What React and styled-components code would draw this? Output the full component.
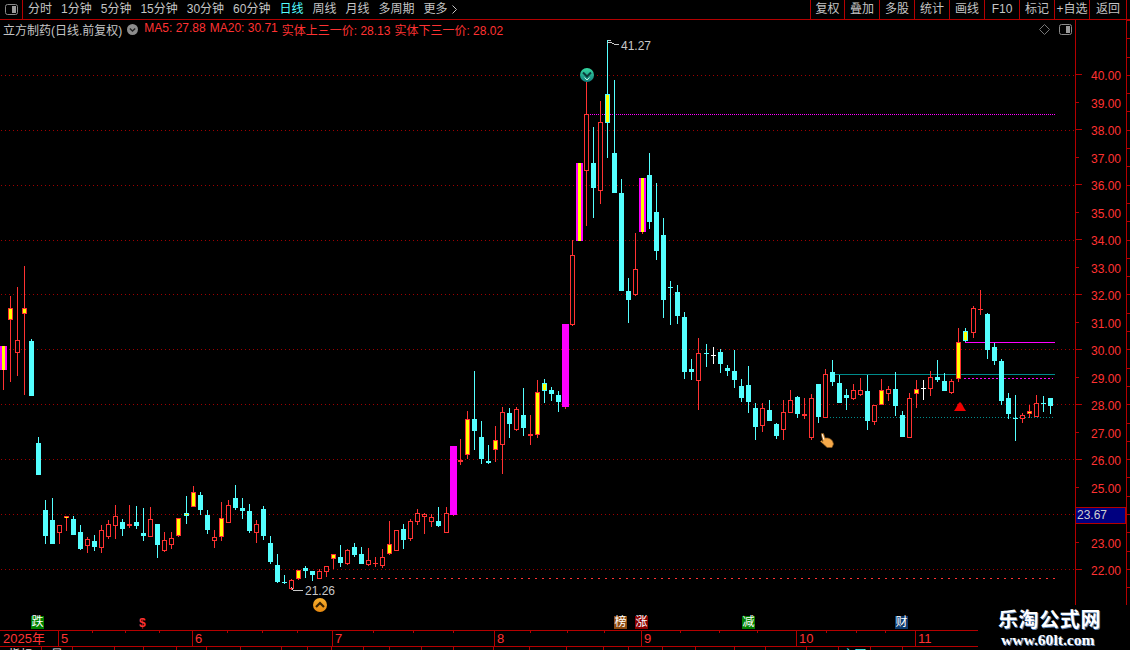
import React from "react";
import styled, { createGlobalStyle } from "styled-components";

const RED = "#ff3232";
const FRAME = "#b40000";
const CYAN = "#54ffff";
const YELLOW = "#ffff00";
const MAGENTA = "#ff00ff";
const CJK = `"Liberation Sans", "Noto Sans CJK SC", sans-serif`;

const GlobalStyle = createGlobalStyle`
  html, body {
    margin: 0;
    background: #000;
    overflow: hidden;
  }
`;

const Page = styled.div`
  position: relative;
  width: 1130px;
  height: 650px;
  overflow: hidden;
  background: #000;
  font-family: ${CJK};
  font-size: 12px;
  display: flex;
  flex-direction: column;
`;

const Toolbar = styled.div`
  height: 20px;
  box-sizing: border-box;
  border-bottom: 1px solid ${FRAME};
  display: flex;
  align-items: stretch;
  color: #c4c4c4;
  line-height: 19px;
`;

const ToggleCell = styled.div`
  width: 23px;
  box-sizing: border-box;
  border-right: 1px solid ${FRAME};
  display: flex;
  align-items: center;
  justify-content: center;
`;

const Periods = styled.div`
  flex: 1;
  display: flex;
  gap: 9px;
  padding-left: 5px;
`;

const Period = styled.span`
  display: flex;
  align-items: center;
  gap: 4px;
  color: ${(props) => (props.$active ? CYAN : "#c4c4c4")};
  white-space: nowrap;
`;

const Tools = styled.div`
  display: flex;
  margin-right: 3px;
  border-right: 1px solid ${FRAME};
`;

const ToolButton = styled.div`
  width: ${(props) => props.$width || 35}px;
  box-sizing: border-box;
  border-left: 1px solid ${FRAME};
  text-align: center;
  white-space: nowrap;
`;

const Main = styled.div`
  display: flex;
  height: 610px;
`;

const ChartPane = styled.div`
  width: 1075px;
  display: flex;
  flex-direction: column;
`;

const InfoRow = styled.div`
  height: 19px;
  display: flex;
  align-items: center;
  padding: 0 3px;
  gap: 5px;
  white-space: nowrap;
`;

const StockName = styled.span`
  color: #c4c4c4;
`;

const MaGroup = styled.div`
  display: flex;
  gap: 4px;
  margin-left: 1px;
`;

const MaValue = styled.span`
  color: ${RED};
`;

const InfoIcons = styled.div`
  margin-left: auto;
  display: flex;
  align-items: center;
  gap: 9px;
`;

const ChartSvg = styled.svg`
  display: block;
  width: 1075px;
  height: 573px;
`;

const EventRow = styled.div`
  position: relative;
  height: 18px;
`;

const EventBadge = styled.span`
  position: absolute;
  top: 4px;
  left: ${(props) => props.$left}px;
  width: 13px;
  height: 13px;
  line-height: 13px;
  text-align: center;
  font-size: 12px;
  color: #fff;
  background: ${(props) => props.$bg};
`;

const MoneyMark = styled.span`
  position: absolute;
  top: 5px;
  left: ${(props) => props.$left}px;
  color: ${RED};
  font-size: 12px;
  font-weight: bold;
  line-height: 13px;
`;

const PriceAxis = styled.div`
  position: relative;
  width: 51px;
  box-sizing: border-box;
  border-left: 1px solid ${FRAME};
  padding-top: 43px;
`;

const PriceLabel = styled.div`
  position: relative;
  height: 27.5px;
  line-height: 27.5px;
  padding-left: 15px;
  color: ${RED};

  &::before {
    content: "";
    position: absolute;
    left: 0;
    top: 11px;
    height: 1px;
    width: ${(props) => (props.$major ? 6 : 3)}px;
    background: ${FRAME};
  }
`;

const CurrentPrice = styled.div`
  position: absolute;
  left: -1px;
  top: 487px;
  width: 51px;
  height: 17px;
  box-sizing: border-box;
  border: 1px solid ${FRAME};
  background: #000080;
  color: #d0d0d0;
  line-height: 15px;
  padding-left: 1px;
`;

const TickStrip = styled.div`
  width: 4px;
  box-sizing: border-box;
  border-left: 1px solid ${FRAME};
  background: repeating-linear-gradient(
    to bottom,
    ${FRAME} 0,
    ${FRAME} 1px,
    transparent 1px,
    transparent 18.3px
  ) 0 0 / 3px 100% no-repeat;
`;

const DateAxis = styled.div`
  position: relative;
  height: 17px;
  box-sizing: border-box;
  border-top: 1px solid ${FRAME};
  border-bottom: 1px solid ${FRAME};
  color: ${RED};
  font-size: 13px;
  line-height: 16px;
`;

const YearLabel = styled.span`
  position: absolute;
  left: 3px;
  top: 0;
`;

const MonthMark = styled.span`
  position: absolute;
  left: ${(props) => props.$left}px;
  top: 0;
  height: 15px;
  padding-left: 2px;
  border-left: 1px solid ${FRAME};
`;

const DateTick = styled.i`
  position: absolute;
  left: ${(props) => props.$left}px;
  top: 0;
  width: 1px;
  height: 2px;
  background: ${FRAME};
`;

const TabRow = styled.div`
  display: flex;
  height: 3px;
  overflow: hidden;
`;

const Tab = styled.div`
  width: ${(props) => props.$width}px;
  box-sizing: border-box;
  border-right: 1px solid ${FRAME};
  text-align: center;
  line-height: 16px;
  white-space: nowrap;
  color: ${(props) => (props.$active ? CYAN : "#e0e0e0")};
`;

const Watermark = styled.div`
  position: absolute;
  left: 978px;
  top: 605px;
  width: 152px;
  height: 45px;
  background: #000;
  display: flex;
  flex-direction: column;
  align-items: flex-start;
  padding-left: 20px;
  box-sizing: border-box;
`;

const WatermarkTitle = styled.div`
  font-family: "Noto Sans CJK SC", sans-serif;
  font-weight: bold;
  font-size: 20px;
  letter-spacing: 0.6px;
  line-height: 26px;
  margin-top: 1px;
  color: #fff;
  text-shadow: 1px 1px 0 #5a7fb0;
`;

const WatermarkUrl = styled.div`
  font-family: "Liberation Serif", serif;
  font-weight: bold;
  font-size: 15.6px;
  line-height: 16px;
  margin-left: 3px;
  color: #fff;
  text-shadow: 1px 1px 0 #5a7fb0;
`;

// type, high, body top, body bottom, low (screen rows)
const CANDLES = [
  ["g",346,346,370,390],["y",296,308,320,382],["r",287,340,353,376],["y",266,308,314,395],
  ["c",339,341,396,396],["c",437,443,475,475],["c",500,510,536,544],["c",498,520,544,544],
  ["r",525,525,533,544],["y",516,516,518,531],["c",516,519,535,535],["c",525,532,549,550],
  ["r",537,539,546,553],["c",535,541,547,551],["r",525,530,548,553],["r",520,524,537,539],
  ["r",505,516,526,539],["c",519,522,529,536],["r",505,524,526,528],["c",506,522,526,529],
  ["c",508,533,536,541],["r",507,519,537,537],["c",524,524,545,558],["r",532,540,551,552],
  ["r",532,538,545,549],["y",518,518,536,537],["k",496,513,516,524],["y",486,492,507,507],
  ["c",492,495,510,515],["c",510,515,530,534],["r",530,537,541,548],["y",502,518,537,541],
  ["r",500,505,523,523],["c",485,498,508,510],["c",498,508,511,519],["c",504,511,531,533],
  ["r",520,524,533,543],["c",506,509,536,540],["c",536,543,562,564],["c",554,565,582,583],
  ["c",575,582,582,584],["r",579,580,589,590],["y",570,570,579,580],["c",566,568,571,578],
  ["c",571,571,575,581],["r",569,571,579,579],["r",566,566,572,577],["y",554,554,559,569],
  ["c",545,557,563,567],["r",549,550,564,565],["c",543,547,555,557],["c",547,554,564,564],
  ["r",548,560,565,566],["r",557,563,563,567],["r",549,557,566,568],["y",521,544,554,555],
  ["r",530,530,551,551],["c",524,529,540,549],["r",519,521,539,541],["r",509,513,522,525],
  ["r",513,514,517,534],["r",514,517,522,527],["c",507,521,526,527],["r",507,513,533,533],
  ["m",446,446,515,516],["r",439,460,462,465],["y",411,419,455,459],["c",371,419,431,450],
  ["c",421,437,459,464],["c",445,461,463,464],["y",426,440,450,462],["r",407,412,445,474],
  ["c",408,413,424,438],["r",407,409,430,431],["c",388,415,428,436],["r",415,434,436,445],
  ["y",380,392,435,438],["k",379,383,391,403],["c",387,390,394,401],["c",391,395,402,412],
  ["m",324,324,407,409],["r",240,255,325,326],["g",163,163,241,241],["r",82,114,171,226],
  ["c",127,163,188,218],["r",101,122,191,204],["k",40,94,123,158],["c",80,153,193,193],
  ["c",179,193,291,291],["c",278,291,300,323],["r",233,269,295,296],["g",178,178,232,234],
  ["c",153,175,222,229],["c",183,212,251,260],["c",218,235,300,318],["c",281,287,287,325],
  ["c",285,292,316,324],["c",312,317,372,379],["c",359,369,372,380],["r",338,353,381,410],
  ["c",344,353,353,367],["w",347,355,355,364],["c",349,352,364,373],["c",365,368,371,376],
  ["c",350,371,380,388],["c",379,386,398,402],["c",366,385,402,413],["c",403,408,427,440],
  ["r",403,408,426,432],["c",400,410,421,421],["c",423,424,436,439],["r",400,412,430,440],
  ["r",390,400,413,413],["c",396,397,414,418],["r",398,414,416,419],["r",394,398,438,440],
  ["c",384,384,417,423],["r",369,374,418,418],["c",360,372,382,386],["c",375,383,403,403],
  ["c",389,395,398,410],["r",384,390,399,400],["r",378,390,395,396],["c",375,391,421,430],
  ["r",405,405,422,425],["y",379,390,405,405],["r",386,389,394,401],["c",372,389,406,416],
  ["c",411,415,437,437],["r",393,398,438,438],["y",380,389,394,408],["w",380,388,388,400],
  ["r",371,377,389,396],["c",360,377,380,382],["c",373,381,391,391],["r",379,381,393,394],
  ["y",328,342,379,382],["k",328,331,341,342],["r",306,308,333,338],["r",290,309,309,315],
  ["c",313,314,350,359],["c",343,347,361,365],["c",359,361,401,405],["c",393,398,414,419],
  ["c",395,418,418,441],["r",413,415,419,423],["y",405,411,414,418],["r",395,403,417,417],
  ["c",396,403,403,412],["c",398,398,406,414],
];

const PRICES = [40, 39, 38, 37, 36, 35, 34, 33, 32, 31, 30, 29, 28, 27, 26, 25, 24, 23, 22];
const GRID_ROWS = [75, 130, 185, 240, 294, 349, 404, 459, 514, 569];
const PERIODS = ["分时", "1分钟", "5分钟", "15分钟", "30分钟", "60分钟", "日线", "周线", "月线", "多周期"];
const TOOLS = ["复权", "叠加", "多股", "统计", "画线", "F10", "标记", "+自选", "返回"];
const MONTHS = [[58, "5"], [192, "6"], [332, "7"], [494, "8"], [641, "9"], [796, "10"], [915, "11"]];
const DATE_TICKS = [92, 125, 159, 227, 262, 297, 373, 413, 453, 530, 567, 604, 680, 719, 757, 826, 856, 885];
const EVENTS = [
  [31, "跌", "#008000"],
  [614, "榜", "#8b4a10"],
  [635, "涨", "#8b0000"],
  [742, "减", "#008000"],
  [895, "财", "#0c3a6e"],
];
const TABS = [
  [42, "指标"], [31, "量"], [42], [29], [33], [30], [34], [41], [26], [24], [32], [26], [32], [32], [40],
  [36], [37], [37], [25], [34], [33], [39], [31], [41], [32, "", true], [32, "主图", true], [32], [106],
];

const candleX = (i) => Math.floor(3.3 + 7.027 * i);

const Candle = ({ index, data }) => {
  const [type, high, top, bottom, low] = data;
  const x = candleX(index);
  const wide = type === "m" || type === "g";
  const left = x - (wide ? 3 : 2);
  const width = wide ? 7 : 5;
  const height = Math.max(bottom - top, 1);
  const wickColor = type === "c" || type === "k" ? CYAN : type === "w" ? "#fff" : RED;

  let body;
  if (type === "c" || type === "w" || (type === "r" && height <= 2)) {
    body = <rect x={left} y={top} width={width} height={height} fill={wickColor} />;
  } else if (type === "r") {
    body = <rect x={left + 0.5} y={top + 0.5} width={width - 1} height={height - 1} fill="#000" stroke={RED} />;
  } else if (type === "m") {
    body = <rect x={left} y={top} width={width} height={height} fill={MAGENTA} />;
  } else if (type === "g") {
    body = (
      <>
        <rect x={left} y={top} width={width} height={height} fill={MAGENTA} />
        <rect x={left + 2} y={top} width={3} height={height} fill={YELLOW} />
      </>
    );
  } else {
    body = (
      <>
        <rect x={left} y={top} width={width} height={height} fill={type === "k" ? CYAN : RED} />
        <rect x={left + 1} y={top + 1} width={3} height={Math.max(height - 2, 1)} fill={YELLOW} />
      </>
    );
  }

  return (
    <g>
      <rect x={x} y={high} width={1} height={low - high} fill={wickColor} />
      {body}
    </g>
  );
};

const ToggleIcon = () => (
  <svg width="13" height="11" viewBox="0 0 13 11">
    <rect x="0.5" y="0.5" width="12" height="10" rx="2" fill="none" stroke="#8a8a8a" />
    <rect x="7" y="2" width="4" height="7" fill="#9a9a9a" />
  </svg>
);

const DiamondIcon = () => (
  <svg width="11" height="11" viewBox="0 0 11 11">
    <path d="M5.5 0.5 L10.5 5.5 L5.5 10.5 L0.5 5.5 Z" fill="none" stroke="#777" />
  </svg>
);

const DropIcon = () => (
  <svg width="11" height="11" viewBox="0 0 11 11">
    <circle cx="5.5" cy="5.5" r="5.5" fill="#8c8c8c" />
    <path d="M2.8 4.5 L5.5 7 L8.2 4.5" fill="none" stroke="#222" strokeWidth="1.4" />
  </svg>
);

const MoreArrow = () => (
  <svg width="5" height="9" viewBox="0 0 5 9">
    <path d="M0.5 0.5 L4.5 4.5 L0.5 8.5" fill="none" stroke="#c4c4c4" />
  </svg>
);

const HandCursor = () => (
  <g transform="translate(820 433)">
    <path
      d="M1.5 0.5 L3.5 0.5 L5 5 L8 5 L10.5 6 L12.5 8 L13.5 11 L12 14.5 L7 14.5 L4.5 12 L0.5 8.5 L1.5 7.5 L3 8.5 L1.5 2 Z"
      fill="#f5a94a"
      stroke="#8a5a20"
      strokeWidth="0.7"
    />
    <path d="M2.3 1.2 L3.8 6.5" stroke="#fff" strokeWidth="1" />
  </g>
);

const Chart = () => (
  <ChartSvg viewBox="0 39 1075 573" shapeRendering="crispEdges">
    {GRID_ROWS.map((y) => (
      <line key={y} x1="1" x2="1075" y1={y + 0.5} y2={y + 0.5} stroke="#a00000" strokeDasharray="1 3" />
    ))}

    <line x1="588" x2="1055" y1="114.5" y2="114.5" stroke={MAGENTA} strokeDasharray="1 1" />
    <line x1="332" x2="1055" y1="578.5" y2="578.5" stroke={RED} strokeDasharray="2 5" />
    <line x1="830" x2="1055" y1="374.5" y2="374.5" stroke="#008b8b" />
    <line x1="830" x2="1053" y1="417.5" y2="417.5" stroke="#008b8b" strokeDasharray="1 2" />
    <line x1="965" x2="1055" y1="342.5" y2="342.5" stroke={MAGENTA} />
    <line x1="964" x2="1053" y1="378.5" y2="378.5" stroke={MAGENTA} strokeDasharray="2 2" />

    {CANDLES.map((c, i) => (
      <Candle key={i} index={i} data={c} />
    ))}

    <path d="M607.5 40.5 H611 M607.5 43.5 L610 42 L614 44 L619 44" fill="none" stroke="#c8c8c8" />
    <text x="621" y="50" fill="#c8c8c8" fontSize="12" fontFamily="Liberation Sans" shapeRendering="auto">41.27</text>
    <path d="M291.5 587 L293.5 590.5 H303" fill="none" stroke="#c8c8c8" />
    <text x="305" y="595" fill="#c8c8c8" fontSize="12" fontFamily="Liberation Sans">21.26</text>

    <g shapeRendering="auto">
      <defs>
        <linearGradient id="tealBall" x1="0" y1="0" x2="0" y2="1">
          <stop offset="0" stopColor="#34d8a0" />
          <stop offset="1" stopColor="#14807f" />
        </linearGradient>
        <linearGradient id="amberBall" x1="0" y1="0" x2="0" y2="1">
          <stop offset="0" stopColor="#f7b030" />
          <stop offset="1" stopColor="#e88a10" />
        </linearGradient>
      </defs>
      <circle cx="587" cy="75" r="7" fill="url(#tealBall)" />
      <path d="M583 72.5 L587 76.5 L591 72.5" fill="none" stroke="#0b3a3a" strokeWidth="2" />
      <path d="M584.5 77.5 L587 80 L589.5 77.5" fill="none" stroke="#bff0e0" strokeWidth="1" />
      <circle cx="320" cy="605" r="7" fill="url(#amberBall)" />
      <path d="M316 607 L320 603 L324 607" fill="none" stroke="#3a2200" strokeWidth="2.2" />
      <path d="M960 402 L962 404 L964 408 L966 411 H954 L956 408 L958 404 Z" fill="#f00000" />
      <HandCursor />
    </g>
  </ChartSvg>
);

const App = () => (
  <Page>
    <GlobalStyle />
    <Toolbar>
      <ToggleCell>
        <ToggleIcon />
      </ToggleCell>
      <Periods>
        {PERIODS.map((p) => (
          <Period key={p} $active={p === "日线"}>{p}</Period>
        ))}
        <Period>
          更多
          <MoreArrow />
        </Period>
      </Periods>
      <Tools>
        {TOOLS.map((t, i) => (
          <ToolButton key={t} $width={i === 0 ? 34 : i === 8 ? 37 : 35}>{t}</ToolButton>
        ))}
      </Tools>
    </Toolbar>

    <Main>
      <ChartPane>
        <InfoRow>
          <StockName>立方制药(日线.前复权)</StockName>
          <DropIcon />
          <MaGroup>
            <MaValue>MA5: 27.88</MaValue>
            <MaValue>MA20: 30.71</MaValue>
            <MaValue>实体上三一价: 28.13</MaValue>
            <MaValue>实体下三一价: 28.02</MaValue>
          </MaGroup>
          <InfoIcons>
            <DiamondIcon />
            <ToggleIcon />
          </InfoIcons>
        </InfoRow>
        <Chart />
        <EventRow>
          {EVENTS.map(([left, label, bg]) => (
            <EventBadge key={label} $left={left} $bg={bg}>{label}</EventBadge>
          ))}
          <MoneyMark $left={139}>$</MoneyMark>
        </EventRow>
      </ChartPane>
      <PriceAxis>
        {PRICES.map((p) => (
          <PriceLabel key={p} $major={p % 2 === 0}>{p === 24 ? "" : p.toFixed(2)}</PriceLabel>
        ))}
        <CurrentPrice>23.67</CurrentPrice>
      </PriceAxis>
      <TickStrip />
    </Main>

    <DateAxis>
      <YearLabel>2025年</YearLabel>
      {DATE_TICKS.map((x) => (
        <DateTick key={x} $left={x} />
      ))}
      {MONTHS.map(([x, label]) => (
        <MonthMark key={label} $left={x}>{label}</MonthMark>
      ))}
    </DateAxis>

    <TabRow>
      {TABS.map(([w, label, active], i) => (
        <Tab key={i} $width={w} $active={active}>{label}</Tab>
      ))}
    </TabRow>

    <Watermark>
      <WatermarkTitle>乐淘公式网</WatermarkTitle>
      <WatermarkUrl>www.60lt.com</WatermarkUrl>
    </Watermark>
  </Page>
);

export default App;
